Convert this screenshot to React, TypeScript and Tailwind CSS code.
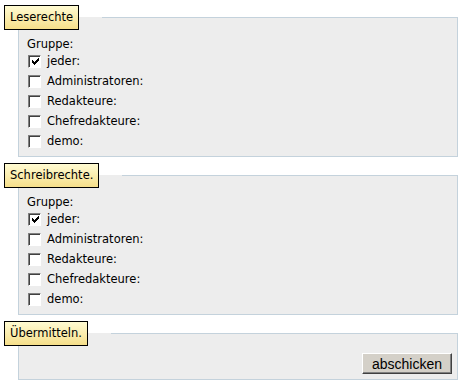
import React from 'react';

const groups = ['jeder:', 'Administratoren:', 'Redakteure:', 'Chefredakteure:', 'demo:'];

const Checkbox: React.FC<{ checked?: boolean }> = ({ checked }) => (
  <span className="w-[13px] h-[13px] shrink-0 border border-t-[#808080] border-l-[#808080] border-r-[#ffffff] border-b-[#ffffff] bg-[#d4d0c8]">
    <span className="block w-[11px] h-[11px] bg-white border-t border-l border-t-[#404040] border-l-[#404040] flex items-center justify-center">
      {checked && (
        <svg width="7" height="7" viewBox="0 0 7 7" className="block">
          <path d="M0 2h1v1h1v1h1v-1h1v-1h1v-1h1v-1h1v3h-1v1h-1v1h-1v1h-1v1h-1v-1h-1v-1h-1z" fill="#000" />
        </svg>
      )}
    </span>
  </span>
);

const Legend: React.FC<{ children: React.ReactNode }> = ({ children }) => (
  <legend className="relative -left-[23px] px-[5px] py-[5px] leading-[13px] border border-black bg-gradient-to-b from-[#fffbd2] to-[#f6df8a] text-black">
    {children}
  </legend>
);

const RightsBox: React.FC<{ title: string }> = ({ title }) => (
  <fieldset className="ml-[18px] mr-[5px] mt-[4px] mb-[6px] pl-[8px] pr-[8px] pt-[7px] pb-[5px] border border-[#c4d2dc] bg-[#ededed]">
    <Legend>{title}</Legend>
    <div className="leading-[14px]">Gruppe:</div>
    {groups.map((g, i) => (
      <label key={g} className="flex items-center h-[20px] gap-[6px] pl-[1px]">
        <Checkbox checked={i === 0} />
        <span className="leading-[13px] pt-[1px]">{g}</span>
      </label>
    ))}
  </fieldset>
);

export default function App() {
  return (
    <div
      className="w-[463px] h-[385px] bg-white text-[11.5px] text-black overflow-hidden pt-px"
      style={{ fontFamily: '"DejaVu Sans", Verdana, sans-serif' }}
    >
      <RightsBox title="Leserechte" />
      <RightsBox title="Schreibrechte." />
      <fieldset className="ml-[18px] mr-[5px] pl-[8px] pr-[5px] pt-[7px] pb-[5px] border border-[#c4d2dc] bg-[#ededed]">
        <Legend>Übermitteln.</Legend>
        <div className="flex justify-end">
          <button
            className="h-[21px] w-[90px] bg-[#d4d0c8] text-[14px] leading-none text-black border border-t-white border-l-white border-r-[#404040] border-b-[#404040] shadow-[inset_-1px_-1px_0_#808080]"
            style={{ fontFamily: '"Liberation Sans", Arial, sans-serif' }}
          >
            abschicken
          </button>
        </div>
      </fieldset>
    </div>
  );
}
